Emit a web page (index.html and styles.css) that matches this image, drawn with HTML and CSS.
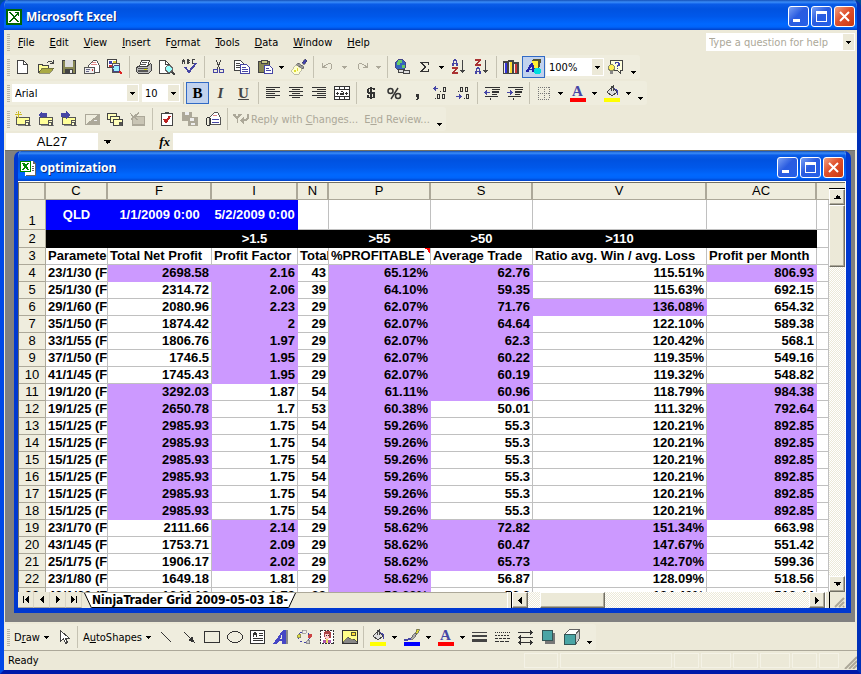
FILE: index.html
```
<!DOCTYPE html>
<html lang="en">
  <head>
    <meta charset="UTF-8" />
    <meta name="viewport" content="width=device-width, initial-scale=1.0" />
    <title>Microsoft Excel</title>
    <link rel="stylesheet" href="styles.css">
  </head>
  <body>
    <!-- shared symbols -->
    <svg class="defs" aria-hidden="true">
      <symbol id="down" viewBox="0 0 5 3"><path d="M0 0h5v1H4v1H3v1H2V2H1V1H0z" /></symbol>
      <symbol id="left" viewBox="0 0 4 7"><path d="M4 0v7H3V6H2V5H1V4H0V3h1V2h1V1h1V0z" /></symbol>
      <symbol id="right" viewBox="0 0 4 7"><path d="M0 0v7h1V6h1V5h1V4h1V3H3V2H2V1H1V0z" /></symbol>
      <symbol id="folder" viewBox="0 0 16 16">
        <path d="M1.500 6.500h13v7h-13z" fill="#ff9" stroke="#555" /><path d="M3 14h13v1H3z" fill="#888" />
        <path d="M10 9h5v6h-5z" fill="#555" /><path d="M11 10h3v1h-3zM11 12h2v2h-2z" fill="#ffc" />
      </symbol>
      <symbol id="bucket" viewBox="0 0 16 16">
        <path d="M3 7l5-5 5 5-5 4z" fill="#ddd" stroke="#444" /><path d="M7 6V2l2-1v5" fill="none" stroke="#444" />
        <path d="M10 3l4 2v5h-1V7l-3-3z" fill="#4646a5" />
      </symbol>
      <symbol id="page" viewBox="0 0 11 14"><path d="M.5 .5h6l4 4v9H.5z" fill="#fff" stroke="#444" /><path d="M6.500 .5v4h4" fill="none" stroke="#444" /></symbol>
      <symbol id="magnifier" viewBox="0 0 9 9"><circle cx="3.500" cy="3.500" r="3" fill="#9ff" stroke="#666" /><path d="M6 6l3 3" stroke="#444" stroke-width="2" /></symbol>
    </svg>

    <div class="window">
      <header class="titlebar">
        <svg class="icon" viewBox="0 0 16 16">
          <path d="M0 0h16v16H0z" fill="#060" /><path d="M2 2h12v12H2z" fill="#fff" />
          <path d="M3 3h2l3 4 3-3H9V3h4v4h-1V5L9 8l4 5h-2L8 9l-4 4H3v-1l4-4-4-4z" fill="#060" />
        </svg>
        <h1>Microsoft Excel</h1>
        <button class="win-btn" aria-label="Minimize"><svg viewBox="0 0 19 19"><path d="M4 12h7v3H4z" fill="#fff" /></svg></button>
        <button class="win-btn" aria-label="Restore"><svg viewBox="0 0 19 19"><path d="M4 4h11v11H4zM5 7v7h9V7z" fill="#fff" fill-rule="evenodd" /></svg></button>
        <button class="win-btn close" aria-label="Close"><svg class="smooth" viewBox="0 0 19 19"><path d="M5 5l9 9M14 5l-9 9" stroke="#fff" stroke-width="2" /></svg></button>
      </header>

      <nav class="menubar">
        <span class="grip"></span>
        <a href="#"><u>F</u>ile</a>
        <a href="#"><u>E</u>dit</a>
        <a href="#"><u>V</u>iew</a>
        <a href="#"><u>I</u>nsert</a>
        <a href="#">F<u>o</u>rmat</a>
        <a href="#"><u>T</u>ools</a>
        <a href="#"><u>D</u>ata</a>
        <a href="#"><u>W</u>indow</a>
        <a href="#"><u>H</u>elp</a>
        <span class="combo ask">
          <input type="text" placeholder="Type a question for help" aria-label="Type a question for help">
          <span class="drop"><svg class="arrow"><use href="#down" /></svg></span>
        </span>
      </nav>

      <!-- standard -->
      <div class="toolbar">
        <span class="grip"></span>
        <button class="tool" aria-label="New"><svg viewBox="0 0 16 16"><use href="#page" x="2" y="1" width="11" height="14" /></svg></button>
        <button class="tool" aria-label="Open"><svg viewBox="0 0 16 16">
          <path d="M0 5h5v1h6v8H0z" fill="#444" /><path d="M1 6h3v1h6v2H4l-3 4z" fill="#ff9" />
          <path d="M4 9h12l-4 5H1z" fill="#aa4" stroke="#553" stroke-width=".6" /><path d="M9 3h1V2h4v1h1V1h1v4h-4V4h2V3h-4v1H9z" fill="#444" /></svg></button>
        <button class="tool" aria-label="Save"><svg viewBox="0 0 16 16">
          <path d="M1 1h14v14H1z" fill="#444" /><path d="M2 2h12v12H2z" fill="#885" /><path d="M4 1h8v7H4z" fill="#ddd" /><path d="M4 10h8v5H4z" fill="#444" /><path d="M9 11h2v3H9z" fill="#eee" /></svg></button>
        <button class="tool" aria-label="E-mail"><svg viewBox="0 0 16 16">
          <path d="M4.500 6.500l5-5h3l3 5v7h-11z" fill="#fff" stroke="#555" /><path d="M8 3h4v1H8zM7 5h6v1H7z" fill="#d88" />
          <path d="M.5 8.500h10v6H.5z" fill="#eee" stroke="#555" /><path d="M2 10h4v1H2zM2 12h3v1H2z" fill="#668" /><path d="M8 10h1v2H8z" fill="#c33" /></svg></button>
        <button class="tool" aria-label="Search"><svg viewBox="0 0 16 16">
          <path d="M.5 .5h9v8h-9z" fill="#fff" stroke="#444" /><path d="M2 2h3v3H2z" fill="#44a" /><path d="M6 2h3v3H6z" fill="#dc3" /><path d="M2 6h3v2H2z" fill="#c33" />
          <path d="M5.500 4.500h7v9h-7z" fill="#eee" stroke="#555" /><circle cx="9.500" cy="9.500" r="3.500" fill="#9ef" stroke="#448" /><path d="M12 12h2v1h1v2h-2v-1h-1z" fill="#d22" /></svg></button>
        <span class="sep"></span>
        <button class="tool" aria-label="Print"><svg viewBox="0 0 16 16">
          <path d="M5.500 1.500h8l-2 6h-8z" fill="#fff" stroke="#444" /><path d="M6 3h5v1H6zM5 5h5v1H5z" fill="#555" />
          <path d="M1.500 7.500h10l3-3 1 1v6l-3 3h-10l-2-2v-3z" fill="#bbb" stroke="#444" /><path d="M2 9h10v1H2zM2 11h10v2H2z" fill="#555" /><path d="M8 10h3v1H8z" fill="#dd0" /></svg></button>
        <button class="tool" aria-label="Print Preview"><svg viewBox="0 0 16 16"><use href="#page" width="11" height="14" y="1" /><use href="#magnifier" x="6" y="6" width="10" height="10" /></svg></button>
        <button class="tool" aria-label="Spelling"><svg viewBox="0 0 16 16">
          <path d="M1 0h1v1h1v4H2V3H1v2H0V1h1zM5 0h2v1h1v1H7v1h1v1H7v1H5zM10 0h3v1h-2v3h2v1h-3z" fill="#444" /><path d="M3 8l4 5 7-9" fill="none" stroke="#4646a5" stroke-width="2" /></svg></button>
        <span class="sep"></span>
        <button class="tool" aria-label="Cut"><svg viewBox="0 0 16 16">
          <path d="M5 1l4 9M10 1l-4 9" stroke="#444" /><circle cx="4.500" cy="12" r="2" fill="none" stroke="#4646a5" /><circle cx="10.500" cy="12" r="2" fill="none" stroke="#4646a5" /></svg></button>
        <button class="tool" aria-label="Copy"><svg viewBox="0 0 16 16">
          <path d="M.5 1.500h6l3 3v7h-9z" fill="#fff" stroke="#444" /><path d="M2 4h4v1H2zM2 6h4v1H2zM2 8h4v1H2z" fill="#444" />
          <path d="M6.500 5.500h6l3 3v6h-9z" fill="#fff" stroke="#4646a5" /><path d="M8 8h4v1H8zM8 10h6v1H8zM8 12h6v1H8z" fill="#4646a5" /></svg></button>
        <button class="tool" aria-label="Paste"><svg viewBox="0 0 16 16">
          <path d="M1 2h12v12H1z" fill="#444" /><path d="M2 3h10v10H2z" fill="#885" /><path d="M4 1h6v3H4z" fill="#cc8" stroke="#444" />
          <path d="M7.500 6.500h5l3 3v5h-8z" fill="#fff" stroke="#4646a5" /><path d="M9 9h3v1H9zM9 11h5v1H9z" fill="#4646a5" /></svg></button>
        <button class="more" aria-label="Paste options"><svg class="arrow"><use href="#down" /></svg></button>
        <button class="tool" aria-label="Format Painter"><svg viewBox="0 0 16 16">
          <path d="M11 4l3-4 2 2-3 4z" fill="#44a" stroke="#334" stroke-width=".5" /><path d="M7 4l6 4-1 2-7-4z" fill="#999" stroke="#444" stroke-width=".6" /><path d="M5 6l6 4-3 5H3l-3-3z" fill="#ffc" stroke="#998" stroke-width=".6" /><path d="M3 11h2v2H3zM6 9h1v3H6z" fill="#dd3" /></svg></button>
        <span class="sep"></span>
        <button class="tool off" aria-label="Undo" disabled><svg viewBox="0 0 16 16"><path d="M2 4h1v3h1V6h2V5h2V4h3v1h1v5h-1v1h-1v-1h1V5H8v1H6v1H5v1h2v1H2z" /></svg></button>
        <button class="more off" aria-label="Undo list" disabled><svg class="arrow"><use href="#down" /></svg></button>
        <button class="tool off" aria-label="Redo" disabled><svg viewBox="0 0 16 16"><path d="M14 4h-1v3h-1V6h-2V5H8V4H5v1H4v5h1v1h1v-1H5V5h3v1h2v1h1v1H9v1h5z" /></svg></button>
        <button class="more off" aria-label="Redo list" disabled><svg class="arrow"><use href="#down" /></svg></button>
        <span class="sep"></span>
        <button class="tool" aria-label="Insert Hyperlink"><svg viewBox="0 0 16 16">
          <circle cx="6.500" cy="6" r="5.500" fill="#36b" stroke="#448" /><path d="M4 1h4v3H6v2H3V3h1zM8 6h3v3H8z" fill="#6c6" /><rect x="4.500" y="10.500" width="6" height="3" rx="1" fill="#ddd" stroke="#444" /><rect x="9.500" y="11.500" width="6" height="3" rx="1" fill="#ddd" stroke="#444" /></svg></button>
        <button class="tool" aria-label="AutoSum"><svg viewBox="0 0 16 16"><path d="M3 3h9v3h-1V4H6l3 4-4 4h6v-2h1v3H3v-1l4-4-4-4z" fill="#333" /></svg></button>
        <button class="more" aria-label="AutoSum options"><svg class="arrow"><use href="#down" /></svg></button>
        <button class="tool" aria-label="Sort Ascending"><svg viewBox="0 0 16 16">
          <path d="M3 0h2v1h1v3h1v3H5V5H3v2H1V4h1V1h1zM3 4h2V2H3z" fill="#4646a5" fill-rule="evenodd" /><path d="M1 8h6v2H6v1H5v1H4v1h3v2H1v-2h1v-1h1v-1h1v-1H1z" fill="#a33" /><path d="M11 1h1v10h2v1h-1v1h-1v1h-1v-1h-1v-1H9v-1h2z" fill="#444" /></svg></button>
        <button class="tool" aria-label="Sort Descending"><svg viewBox="0 0 16 16">
          <path d="M1 0h6v2H6v1H5v1H4v1h3v2H1V5h1V4h1V3h1V2H1z" fill="#a33" /><path d="M3 8h2v1h1v3h1v3H5v-2H3v2H1v-3h1V9h1zM3 12h2v-2H3z" fill="#4646a5" fill-rule="evenodd" /><path d="M11 1h1v10h2v1h-1v1h-1v1h-1v-1h-1v-1H9v-1h2z" fill="#444" /></svg></button>
        <span class="sep"></span>
        <button class="tool" aria-label="Chart Wizard"><svg viewBox="0 0 16 16">
          <path d="M0 2h5v13H0zM5 1h6v14H5zM10 3h6v12h-6z" fill="#444" /><path d="M1 4h1v10H1zM6 3h1v11H6zM11 5h1v9h-1z" fill="#eee" /><path d="M2 4h2v10H2z" fill="#33d" /><path d="M7 3h2v11H7z" fill="#fd3" /><path d="M12 5h2v9h-2z" fill="#c33" /></svg></button>
        <button class="tool on" aria-label="Drawing"><svg viewBox="0 0 16 16">
          <path d="M6 1l2-1h7l-1 8-3 2H6z" fill="#553" /><path d="M6 2h6v7H6z" fill="#fe3" /><path d="M5 4h2l2 9H6v-2H3v2H0v-1zM6 7l-2 3h2z" fill="#22a" fill-rule="evenodd" /><circle cx="11.500" cy="12" r="3.500" fill="#0dd" /></svg></button>
        <span class="combo zoom">
          <select aria-label="Zoom"><option>100%</option></select>
          <span class="drop"><svg class="arrow"><use href="#down" /></svg></span>
        </span>
        <button class="tool" aria-label="Help"><svg viewBox="0 0 16 16">
          <path d="M2.500 1.500h12v10h-2v3l-3-3h-7z" fill="#ffd" stroke="#444" /><path d="M7 3h4v1h1v3h-2v1H9V6h1V4H8v1H7zM9 9h1v1H9z" fill="#44a" /><circle cx="3.500" cy="8.500" r="3" fill="#fe5" stroke="#886" /><path d="M2 12h3v3H2z" fill="#888" /></svg></button>
        <button class="more end" aria-label="Toolbar Options"><svg class="arrow"><use href="#down" /></svg></button>
      </div>

      <!-- formatting -->
      <div class="toolbar">
        <span class="grip"></span>
        <span class="combo font">
          <select aria-label="Font"><option>Arial</option></select>
          <span class="drop"><svg class="arrow"><use href="#down" /></svg></span>
        </span>
        <span class="combo size">
          <select aria-label="Font Size"><option>10</option></select>
          <span class="drop"><svg class="arrow"><use href="#down" /></svg></span>
        </span>
        <span class="sep"></span>
        <button class="tool letter on"><b>B</b></button>
        <button class="tool letter"><i>I</i></button>
        <button class="tool letter"><u>U</u></button>
        <span class="sep"></span>
        <button class="tool" aria-label="Align Left"><svg viewBox="0 0 16 16"><path d="M1 2h14v1H1zM1 4h9v1H1zM1 6h14v1H1zM1 8h9v1H1zM1 10h14v1H1zM1 12h9v1H1z" fill="#333" /></svg></button>
        <button class="tool" aria-label="Center"><svg viewBox="0 0 16 16"><path d="M1 2h14v1H1zM4 4h8v1H4zM1 6h14v1H1zM4 8h8v1H4zM1 10h14v1H1zM4 12h8v1H4z" fill="#333" /></svg></button>
        <button class="tool" aria-label="Align Right"><svg viewBox="0 0 16 16"><path d="M1 2h14v1H1zM6 4h9v1H6zM1 6h14v1H1zM6 8h9v1H6zM1 10h14v1H1zM6 12h9v1H6z" fill="#333" /></svg></button>
        <button class="tool" aria-label="Merge and Center"><svg viewBox="0 0 16 16">
          <path d="M.5 1.500h15v13H.5z" fill="#fff" stroke="#333" /><path d="M1 4h14v1H1zM1 11h14v1H1zM5 1h1v3H5zM10 1h1v3h-1zM5 12h1v3H5zM10 12h1v3h-1zM2 8h3v1H2zM3 7h1v3H3zM11 8h3v1h-3zM12 7h1v3h-1zM7 6h2v1h1v3H6V8h3V7H7z" fill="#333" /></svg></button>
        <span class="sep"></span>
        <button class="tool" aria-label="Currency Style"><svg viewBox="0 0 16 16"><path d="M7 2h2v1h3v2h-2V4H9v3h2l1 1v4l-1 1H9v1H7v-1H4v-3h2v2h1V9H5L4 8V4l1-1h2zM7 4H6v3h1zM9 9v3h1V9z" fill="#333" fill-rule="evenodd" /></svg></button>
        <button class="tool" aria-label="Percent Style"><svg class="smooth" viewBox="0 0 16 16"><path d="M12 3L5 14" stroke="#333" stroke-width="1.500" /><circle cx="4.500" cy="6" r="2.500" fill="none" stroke="#333" stroke-width="1.500" /><circle cx="12" cy="11" r="2.500" fill="none" stroke="#333" stroke-width="1.500" /></svg></button>
        <button class="tool" aria-label="Comma Style"><svg viewBox="0 0 16 16"><path d="M7 9h3v4l-1 1-1 1H7v-1h1v-2H7z" fill="#333" /></svg></button>
        <button class="tool" aria-label="Increase Decimal"><svg viewBox="0 0 16 16">
          <path d="M1 3h1V2h1V1h1v2h2v1H4v2H3V5H2V4H1z" fill="#4646a5" /><path d="M8 6h1v1H8zM11 2h3v5h-3zM12 3v3h1V3zM3 13h1v1H3zM5 9h3v5H5zM6 10v3h1v-3zM10 9h3v5h-3zM11 10v3h1v-3z" fill="#333" fill-rule="evenodd" /></svg></button>
        <button class="tool" aria-label="Decrease Decimal"><svg viewBox="0 0 16 16">
          <path d="M1 11h3V9h1v1h1v1h1v1H6v1H5v1H4v-2H1z" fill="#4646a5" /><path d="M3 6h1v1H3zM5 2h3v5H5zM6 3v3h1V3zM10 2h3v5h-3zM11 3v3h1V3zM9 13h1v1H9zM11 9h3v5h-3zM12 10v3h1v-3z" fill="#333" fill-rule="evenodd" /></svg></button>
        <span class="sep"></span>
        <button class="tool" aria-label="Decrease Indent"><svg viewBox="0 0 16 16"><path d="M1 2h15v1H1zM8 4h8v1H8zM8 6h7v2H8zM8 9h5v1H8zM1 11h13v1H1zM6 13h1v2H6z" fill="#333" /><path d="M0 7h1V6h1V5h1v2h3v1H3v2H2V9H1V8H0z" fill="#4646a5" /></svg></button>
        <button class="tool" aria-label="Increase Indent"><svg viewBox="0 0 16 16"><path d="M1 2h15v1H1zM8 4h8v1H8zM8 6h7v2H8zM8 9h5v1H8zM1 11h13v1H1zM6 13h1v2H6z" fill="#333" /><path d="M6 7H5V6H4V5H3v2H0v1h3v2h1V9h1V8h1z" fill="#4646a5" /></svg></button>
        <span class="sep"></span>
        <button class="tool" aria-label="Borders"><svg viewBox="0 0 16 16"><path d="M2 2.500h12M2 8.500h12M2 14.500h12M2.500 2v12M8.500 2v12M13.500 2v12" stroke="#777" stroke-dasharray="1" /></svg></button>
        <button class="more" aria-label="Border options"><svg class="arrow"><use href="#down" /></svg></button>
        <button class="tool letter color red" aria-label="Font Color"><b>A</b></button>
        <button class="more" aria-label="Font Color options"><svg class="arrow"><use href="#down" /></svg></button>
        <button class="tool color yellow" aria-label="Fill Color"><svg viewBox="0 0 16 13"><use href="#bucket" width="16" height="16" /></svg></button>
        <button class="more" aria-label="Fill Color options"><svg class="arrow"><use href="#down" /></svg></button>
        <button class="more end" aria-label="Toolbar Options"><svg class="arrow"><use href="#down" /></svg></button>
      </div>

      <!-- reviewing -->
      <div class="toolbar">
        <span class="grip"></span>
        <button class="tool" aria-label="New Comment"><svg viewBox="0 0 16 16"><use href="#folder" width="16" height="16" /><path d="M3 0h1v7H3zM0 3h7v1H0zM1 1h1v1H1zM5 1h1v1H5zM1 5h1v1H1z" fill="#cb2" /></svg></button>
        <button class="tool" aria-label="Previous Comment"><svg viewBox="0 0 16 16"><use href="#folder" width="16" height="16" /><path d="M0 4l4-4v2h5v4H4v2z" fill="#4646a5" /></svg></button>
        <button class="tool" aria-label="Next Comment"><svg viewBox="0 0 16 16"><use href="#folder" width="16" height="16" /><path d="M9 4L5 0v2H0v4h5v2z" fill="#4646a5" /></svg></button>
        <button class="tool" aria-label="Show Comment" disabled><svg viewBox="0 0 16 16"><path d="M1.500 3.500h14v10h-14z" fill="none" stroke="#aca899" /><path d="M15 3v11H1z" fill="#aca899" /><path d="M10 9h3v1h-3z" fill="#eee" /></svg></button>
        <button class="tool" aria-label="Show All Comments"><svg viewBox="0 0 16 16">
          <path d="M.5 2.500h9v6h-9z" fill="#ffb" stroke="#444" /><path d="M3.500 5.500h9v6h-9z" fill="#ffb" stroke="#444" /><path d="M6.500 8.500h9v6h-9z" fill="#ffb" stroke="#444" /><path d="M12 11h3v4h-3z" fill="#555" /></svg></button>
        <button class="tool" aria-label="Delete Comment" disabled><svg viewBox="0 0 16 16"><path d="M2 5h13v10H2z" fill="#aca899" /><path d="M3 6h11v7H3z" fill="#c9c5b5" /><path d="M0 2l3 3 6-4v2L5 6l4 3H7L4 7 1 9l1-3z" fill="#aca899" /></svg></button>
        <span class="sep"></span>
        <button class="tool" aria-label="Create Task"><svg viewBox="0 0 16 16"><path d="M2.500 2.500h11v12h-11z" fill="#fff" stroke="#444" /><path d="M6 1h4v2H6z" fill="#444" /><path d="M5 8l2 3 4-6" fill="none" stroke="#b22" stroke-width="2" /></svg></button>
        <button class="tool" aria-label="Update File" disabled><svg viewBox="0 0 16 16"><path d="M0 1h10v9H0z" fill="#aca899" /><path d="M3 1h4v3H3z" fill="#eee" /><path d="M6 6h10v9H6z" fill="#aca899" /><path d="M8 7h4v3H8zM9 12h4v2H9z" fill="#eee" /></svg></button>
        <button class="tool" aria-label="Send to Mail Recipient"><svg viewBox="0 0 16 16"><path d="M4.500 6.500l5-5h3l3 5v7h-11z" fill="#fff" stroke="#555" /><path d="M8 4h4v1H8z" fill="#d88" /><path d="M7 8h7v1H7zM7 11h7v1H7z" fill="#4646a5" /><rect x="1.500" y="6.500" width="4" height="8" rx="2" fill="none" stroke="#333" /></svg></button>
        <span class="sep"></span>
        <button class="text-btn off" disabled>
          <svg viewBox="0 0 16 16"><path d="M0 3h3v2h2V3h4v1H8v1H7v1H6v1H5v5H4V8H3V7H2V6H1V5H0zM7 10V9h1V8h1V7h1V6h1v2h2V7h1V3h2v5h-1v1h-1v1h-3v3h-1v-1H9v-1H8v-1z" /></svg>
          <span>Reply with <u>C</u>hanges...</span>
        </button>
        <button class="text-btn off" disabled><span>E<u>n</u>d Review...</span></button>
        <button class="more end" aria-label="Toolbar Options"><svg class="arrow"><use href="#down" /></svg></button>
      </div>

      <div class="formula">
        <input class="name-box" type="text" value="AL27" aria-label="Name Box">
        <button class="name-drop" aria-label="Names"><svg class="arrow big"><use href="#down" /></svg></button>
        <button class="fx" aria-label="Insert Function">fx</button>
        <input class="formula-input" type="text" aria-label="Formula Bar">
      </div>

      <main class="workspace">
        <section class="book">
          <header class="titlebar">
            <svg class="icon" viewBox="0 0 16 16">
              <path d="M5 1h8l3 3v12H5z" fill="#fff" /><path d="M13 1l3 3h-3zM15 4h1v12H6v-1h9zM12 6h2v1h-2zM12 8h2v1h-2zM12 10h2v1h-2z" fill="#666" />
              <path d="M0 1h11v11H0z" fill="#080" /><path d="M1 2h9v9H1z" fill="#fff" /><path d="M2 3h2l2 2 1-2h2L7 6l2 4H7L5 8l-1 2H2l2-3z" fill="#080" />
            </svg>
            <h2>optimization</h2>
            <button class="win-btn" aria-label="Minimize"><svg viewBox="0 0 19 19"><path d="M4 12h7v3H4z" fill="#fff" /></svg></button>
            <button class="win-btn" aria-label="Maximize"><svg viewBox="0 0 19 19"><path d="M4 4h11v11H4zM5 7v7h9V7z" fill="#fff" fill-rule="evenodd" /></svg></button>
            <button class="win-btn close" aria-label="Close"><svg class="smooth" viewBox="0 0 19 19"><path d="M5 5l9 9M14 5l-9 9" stroke="#fff" stroke-width="2" /></svg></button>
          </header>

          <div class="sheet">
            <div class="grid">
              <table>
                <colgroup>
                  <col class="w-num"><col class="w-c"><col class="w-f"><col class="w-i"><col class="w-n">
                  <col class="w-p"><col class="w-p"><col class="w-v"><col class="w-ac"><col>
                </colgroup>
                <thead>
                  <tr><th></th><th>C</th><th>F</th><th>I</th><th>N</th><th>P</th><th>S</th><th>V</th><th>AC</th><th></th></tr>
                </thead>
                <tbody id="rows">
                  <tr class="dates"><th>1</th><td class="blue">QLD</td><td class="blue">1/1/2009 0:00</td><td class="blue">5/2/2009 0:00</td><td></td><td></td><td></td><td></td><td></td><td></td></tr>
                  <tr class="limits"><th>2</th><td></td><td></td><td>&gt;1.5</td><td></td><td>&gt;55</td><td>&gt;50</td><td>&gt;110</td><td></td><td></td></tr>
                  <tr class="names"><th>3</th><td>Parameters</td><td>Total Net Profit</td><td>Profit Factor</td><td>Total</td><td class="note">%PROFITABLE</td><td>Average Trade</td><td>Ratio avg. Win / avg. Loss</td><td>Profit per Month</td><td></td></tr>
                </tbody>
              </table>
            </div>
            <div class="vscroll">
              <span class="split-h"></span>
              <button class="sb" aria-label="Scroll up"><svg class="arrow big flip"><use href="#down" /></svg></button>
              <span class="thumb"></span>
              <button class="sb last" aria-label="Scroll down"><svg class="arrow big"><use href="#down" /></svg></button>
            </div>
          </div>

          <footer class="tabs">
            <button class="nav" aria-label="First sheet"><svg viewBox="0 0 6 7"><path d="M0 0h1v7H0z" /><use href="#left" x="2" width="4" height="7" /></svg></button>
            <button class="nav" aria-label="Previous sheet"><svg viewBox="0 0 6 7"><use href="#left" x="1" width="4" height="7" /></svg></button>
            <button class="nav" aria-label="Next sheet"><svg viewBox="0 0 6 7"><use href="#right" x="1" width="4" height="7" /></svg></button>
            <button class="nav" aria-label="Last sheet"><svg viewBox="0 0 6 7"><use href="#right" width="4" height="7" /><path d="M5 0h1v7H5z" /></svg></button>
            <div class="tab-area">
              <svg class="slant" viewBox="0 0 8 15"><path d="M0 0h8v15H7z" fill="#fff" /><path d="M.5 0l7 15" stroke="#000" fill="none" /></svg>
              <a class="tab" href="#">NinjaTrader Grid 2009-05-03 18-</a>
              <svg class="slant" viewBox="0 0 8 15"><path d="M0 0h8L1 15H0z" fill="#fff" /><path d="M7.500 0l-7 15" stroke="#000" fill="none" /></svg>
            </div>
            <div class="hscroll">
              <span class="split-v"></span>
              <button class="sb" aria-label="Scroll left"><svg viewBox="0 0 4 7"><use href="#left" width="4" height="7" /></svg></button>
              <span class="thumb"></span>
              <button class="sb last" aria-label="Scroll right"><svg viewBox="0 0 4 7"><use href="#right" width="4" height="7" /></svg></button>
              <span class="split-v"></span>
            </div>
            <svg class="sizer smooth" viewBox="0 0 16 16"><path d="M5 15l9-9M9 15l5-5M13 15l1-1" stroke="#aca899" stroke-width="2" /></svg>
          </footer>
        </section>
      </main>

      <!-- drawing -->
      <div class="toolbar drawing">
        <span class="grip"></span>
        <button class="text-btn"><span>D<u>r</u>aw</span><svg class="arrow"><use href="#down" /></svg></button>
        <button class="tool" aria-label="Select Objects"><svg viewBox="0 0 16 16"><path d="M5.500 1.500v11l3-3 2 5 2-1-2-4h4z" fill="#fff" stroke="#444" /></svg></button>
        <span class="sep"></span>
        <button class="text-btn"><span>A<u>u</u>toShapes</span><svg class="arrow"><use href="#down" /></svg></button>
        <button class="tool" aria-label="Line"><svg viewBox="0 0 16 16"><path d="M3 3l10 10" stroke="#333" /></svg></button>
        <button class="tool" aria-label="Arrow"><svg viewBox="0 0 16 16"><path d="M3 3l8 8" stroke="#333" /><path d="M14 14L7 11l4-4z" fill="#333" /></svg></button>
        <button class="tool" aria-label="Rectangle"><svg viewBox="0 0 16 16"><path d="M.5 2.500h15v11H.5z" fill="none" stroke="#333" /></svg></button>
        <button class="tool" aria-label="Oval"><svg viewBox="0 0 16 16"><ellipse cx="8" cy="8" rx="7.500" ry="5.500" fill="none" stroke="#333" /></svg></button>
        <button class="tool" aria-label="Text Box"><svg viewBox="0 0 16 16"><path d="M.5 1.500h14v13H.5z" fill="#fff" stroke="#333" /><path d="M4 3h2v1h1v4H6V6H4v2H3V4h1zM9 4h4v1H9zM9 6h4v1H9zM3 9h10v1H3zM3 11h10v1H3z" fill="#333" /></svg></button>
        <button class="tool" aria-label="WordArt"><svg viewBox="0 0 16 16"><path d="M12 1h3v14h-2z" fill="#888" /><path d="M10 1h3v14h-4v-3H6l-2 3H0zM9 5l-2 5h2z" fill="#4646c5" fill-rule="evenodd" /></svg></button>
        <button class="tool" aria-label="Diagram"><svg viewBox="0 0 16 16"><circle cx="8" cy="8" r="5.500" fill="none" stroke="#4646a5" stroke-dasharray="3 2" /><path d="M6 1h4v3H6z" fill="#eee" stroke="#666" stroke-width=".5" /><circle cx="3" cy="7" r="2" fill="#dd4" stroke="#555" stroke-width=".5" /><circle cx="14" cy="7" r="2" fill="#c44" /><circle cx="12" cy="13" r="2" fill="#ccc" stroke="#555" stroke-width=".5" /></svg></button>
        <button class="tool" aria-label="Clip Art"><svg viewBox="0 0 16 16"><path d="M1.500 1.500h13v13h-13z" fill="#fff" stroke="#333" stroke-dasharray="2 1" /><path d="M6 2h5v1h1v6h-2v1H6V8H5V3h1z" fill="#a44" /><path d="M6 5h4v5H7V9H6z" fill="#fcc" /><path d="M7 6h1v1H7zM9 6h1v1H9z" fill="#333" /><path d="M4 11h8v3H4z" fill="#a5a" /><path d="M7 10h2v4H7z" fill="#ed5" /></svg></button>
        <button class="tool" aria-label="Picture"><svg viewBox="0 0 16 16"><path d="M.5 1.500h15v13H.5z" fill="#ff8" stroke="#333" /><circle cx="11.500" cy="5" r="2" fill="#fd3" stroke="#553" /><path d="M1 13l5-5 4 3 2-1 3 3v1H1z" fill="#888" stroke="#333" stroke-width=".6" /></svg></button>
        <span class="sep"></span>
        <button class="tool color yellow" aria-label="Fill Color"><svg viewBox="0 0 16 13"><use href="#bucket" width="16" height="16" /></svg></button>
        <button class="more" aria-label="Fill Color options"><svg class="arrow"><use href="#down" /></svg></button>
        <button class="tool color blueline" aria-label="Line Color"><svg viewBox="0 0 16 13"><path d="M13 0h2v2l-2 3h-2z" fill="#dd3" stroke="#444" stroke-width=".6" /><path d="M11 4l2 1-4 5H6z" fill="#aaa" stroke="#333" stroke-width=".6" /><path d="M0 10h4v-1h3v2H4v1H0z" fill="#4646a5" /></svg></button>
        <button class="more" aria-label="Line Color options"><svg class="arrow"><use href="#down" /></svg></button>
        <button class="tool letter color red" aria-label="Font Color"><b>A</b></button>
        <button class="more" aria-label="Font Color options"><svg class="arrow"><use href="#down" /></svg></button>
        <button class="tool" aria-label="Line Style"><svg viewBox="0 0 16 16"><path d="M0 3h15v1H0zM0 6h15v2H0zM0 10h15v3H0z" fill="#444" /></svg></button>
        <button class="tool" aria-label="Dash Style"><svg viewBox="0 0 16 16"><path d="M0 3.500h15" stroke="#333" stroke-dasharray="1" /><path d="M0 6.500h15" stroke="#333" stroke-dasharray="2 1" /><path d="M0 9.500h15" stroke="#333" stroke-dasharray="3 1" /><path d="M0 12.500h15" stroke="#333" stroke-dasharray="4 1" /></svg></button>
        <button class="tool" aria-label="Arrow Style"><svg viewBox="0 0 16 16"><path d="M0 3h12V1h1v1h1v1h1v1h-1v1h-1v1h-1V4H0zM3 8h12v1H3v2H2v-1H1V9H0V8h1V7h1V6h1zM3 13h9v-2h1v1h1v1h1v1h-1v1h-1v1h-1v-2H3v2H2v-1H1v-1H0v-1h1v-1h1v-1h1z" fill="#333" /></svg></button>
        <button class="tool" aria-label="Shadow Style"><svg viewBox="0 0 16 16"><path d="M4 4h10v11H4z" fill="#777" /><path d="M1.500 1.500h10v10h-10z" fill="#4aa5a5" stroke="#355" /></svg></button>
        <button class="tool" aria-label="3-D Style"><svg viewBox="0 0 16 16"><path d="M.5 5.500l5-5h10l-4 5z" fill="#fff" stroke="#666" /><path d="M11.500 5.500l4-5v9l-4 6z" fill="#ccc" stroke="#666" /><path d="M.5 5.500h11v10H.5z" fill="#4aa5a5" stroke="#355" /></svg></button>
        <button class="more end" aria-label="Toolbar Options"><svg class="arrow"><use href="#down" /></svg></button>
      </div>

      <footer class="status">
        <span class="message">Ready</span>
        <span class="panel p34"></span><span class="panel p112"></span><span class="panel p25"></span><span class="panel p30"></span><span class="panel p25"></span><span class="panel p30"></span><span class="panel p25"></span><span class="panel p20"></span>
        <svg class="sizer smooth" viewBox="0 0 16 16"><path d="M4 16L16 4M8 16l8-8M12 16l4-4" stroke="#aca899" stroke-width="2" /></svg>
      </footer>
    </div>
    <script src="script.js"></script>
  </body>
</html>
```
FILE: styles.css
```
* {
  box-sizing: border-box;
}
body {
  margin: 0;
  font-family: Tahoma, "DejaVu Sans Condensed", "Noto Sans", sans-serif;
  font-size: 11px;
  color: #000;
  background-color: #004e98;
}
button,
input,
select {
  margin: 0;
  padding: 0;
  border: 0;
  border-radius: 0;
  background: none;
  font: inherit;
  color: inherit;
  appearance: none;
  outline: 0;
}
a {
  color: inherit;
  text-decoration: none;
}
svg {
  display: block;
  flex: none;
  shape-rendering: crispEdges;
}
.smooth {
  shape-rendering: auto;
}
.defs {
  display: none;
}
.off {
  color: #aca899;
  fill: #aca899;
}

/* window */
.window {
  display: flex;
  flex-direction: column;
  height: 100vh;
  border: 4px solid #0048e8;
  border-top: 0;
  border-color: #0048e8 #0030b8 #0018a8 #0048e8;
  border-radius: 8px 8px 0 0;
  background-color: #ece9d8;
  overflow: hidden;
}
.titlebar {
  display: flex;
  align-items: center;
  flex: none;
  gap: 2px;
  height: 30px;
  margin: 0 -4px;
  padding: 3px 6px 0;
  background: linear-gradient(#1450b8, #3a8cf8 7%, #0a5ce8 14%, #0052e0 30%, #0058ea 55%, #0068ff 80%, #0064fa 90%, #0040c8);
}
.titlebar .icon {
  width: 16px;
  height: 16px;
}
.titlebar h1,
.titlebar h2 {
  flex: 1;
  margin: 0;
  padding-left: 2px;
  font-family: "Trebuchet MS", "Noto Sans", sans-serif;
  font-size: 12px;
  line-height: 16px;
  color: #fff;
  text-shadow: 1px 1px #0a2a80;
}
.win-btn {
  width: 21px;
  height: 21px;
  border: 1px solid #fff;
  border-radius: 3px;
  background: linear-gradient(135deg, #7aa0f4, #2a5ce0 45%, #2460e8);
}
.win-btn svg {
  width: 19px;
  height: 19px;
}
.close {
  background: linear-gradient(135deg, #f0a080, #e0502c 45%, #c83810);
}

/* menu */
.menubar {
  display: flex;
  align-items: center;
  gap: 15px;
  flex: none;
  height: 24px;
  padding: 0 2px 0 3px;
}
.grip {
  flex: none;
  width: 3px;
  height: 17px;
  margin: 0 1px 0 3px;
  background: repeating-linear-gradient(#b8b5a4 0 1px, transparent 1px 2px);
}
.menubar .grip {
  margin: 0 -7px 0 0;
}
.combo {
  display: flex;
  flex: none;
  height: 18px;
  border: 1px solid #fff;
  background-color: #fff;
}
.combo input,
.combo select {
  flex: 1;
  min-width: 0;
  padding-left: 2px;
}
.drop {
  display: flex;
  align-items: center;
  justify-content: center;
  width: 11px;
  background-color: #ece9d8;
}
.arrow {
  width: 5px;
  height: 3px;
}
.arrow.big {
  width: 7px;
  height: 4px;
}
.flip {
  transform: rotate(180deg);
}
.ask {
  width: 149px;
  margin-left: auto;
}
.ask input::placeholder {
  color: #aca899;
}
.zoom {
  width: 58px;
  margin-left: 1px;
}
.font {
  width: 127px;
  margin-left: 1px;
}
.size {
  width: 38px;
  margin-left: 3px;
}

/* toolbars */
.toolbar {
  display: flex;
  align-items: center;
  align-self: flex-start;
  flex: none;
  height: 24px;
  margin: 1px 0;
  border-radius: 0 3px 3px 0;
  background-color: #efedde;
}
.tool {
  display: flex;
  align-items: center;
  justify-content: center;
  flex: none;
  width: 23px;
  height: 22px;
}
.tool svg {
  width: 16px;
  height: 16px;
}
.on {
  border: 1px solid #316ac5;
  background-color: #c1d2ee;
}
.letter {
  font-family: "Liberation Serif", serif;
  font-size: 15px;
  line-height: 16px;
}
.letter i,
.letter u {
  font-weight: bold;
  color: #444;
}
.color {
  flex-direction: column;
}
.color svg {
  height: 13px;
}
.color::after {
  content: "";
  width: 16px;
  height: 4px;
}
.letter.color b {
  height: 13px;
  line-height: 13px;
  color: #4646a5;
}
.red::after {
  background-color: #f00;
}
.yellow::after {
  background-color: #ff0;
}
.blueline::after {
  background-color: #00f;
}
.more {
  display: flex;
  align-items: center;
  justify-content: center;
  flex: none;
  width: 11px;
  height: 22px;
}
.end {
  width: 13px;
  align-items: flex-end;
  padding-bottom: 4px;
}
.sep {
  flex: none;
  width: 1px;
  height: 22px;
  margin: 0 2px 0 3px;
  background-color: #c5c2b2;
}
.text-btn {
  display: flex;
  align-items: center;
  flex: none;
  height: 22px;
  padding: 0 3px;
  white-space: nowrap;
}
.text-btn > svg:first-child {
  width: 16px;
  height: 16px;
  margin-right: 2px;
}
.text-btn .arrow {
  margin-left: 4px;
}

/* formula bar */
.formula {
  display: flex;
  flex: none;
  height: 17px;
  margin-top: 1px;
  padding-left: 2px;
}
.formula input {
  background-color: #fff;
}
.name-box {
  width: 92px;
  font-family: Arial, "Liberation Sans", sans-serif;
  font-size: 13px;
  text-align: center;
}
.name-drop {
  display: flex;
  align-items: center;
  justify-content: center;
  width: 19px;
}
.fx {
  flex: none;
  width: 56px;
  padding-right: 3px;
  text-align: right;
  font: italic bold 13px "Liberation Serif", serif;
}
.formula-input {
  flex: 1;
}

/* workbook */
.workspace {
  display: flex;
  flex: 1;
  min-height: 0;
  margin: 0 2px 2px 1px;
  padding: 0 4px 9px 9px;
  border-top: 1px solid #716f64;
  background-color: #808080;
}
.book {
  display: flex;
  flex-direction: column;
  flex: 1;
  min-width: 0;
  border: solid #0038d0;
  border-width: 0 5px 5px 4px;
  border-radius: 7px 7px 0 0;
  background-color: #ece9d8;
  overflow: hidden;
}
.sheet {
  display: flex;
  flex: 1;
  min-height: 0;
  border-top: 1px solid #fff;
}
.grid {
  flex: 1;
  overflow: hidden;
  border-top: 1px solid #716f64;
  border-left: 1px solid #716f64;
  background-color: #fff;
}
table {
  width: 100%;
  border-spacing: 0;
  table-layout: fixed;
  font-family: Arial, "Liberation Sans", sans-serif;
  font-size: 13px;
  line-height: 16px;
}
.w-num {
  width: 27px;
}
.w-c {
  width: 62px;
}
.w-f {
  width: 104px;
}
.w-i {
  width: 86px;
}
.w-n {
  width: 31px;
}
.w-p {
  width: 102px;
}
.w-v {
  width: 174px;
}
.w-ac {
  width: 110px;
}
th {
  padding: 0;
  border-right: 1px solid #aca899;
  border-bottom: 1px solid #aca899;
  font-weight: normal;
  background-color: #efedde;
}
thead th {
  height: 17px;
  border-right-width: 2px;
}
thead th:last-child {
  border-right: 0;
}
td {
  height: 17px;
  padding: 0 2px;
  border-right: 1px solid #c0c0c0;
  border-bottom: 1px solid #c0c0c0;
  font-weight: bold;
  text-align: right;
  white-space: nowrap;
  overflow: hidden;
}
td:nth-child(2),
.names td {
  text-align: left;
}
.hit {
  border-color: #c9f;
  background-color: #c9f;
}
.dates td {
  height: 30px;
  text-align: center;
}
.dates td:nth-child(2) {
  text-align: center;
}
.dates th {
  vertical-align: bottom;
}
.dates .blue {
  border-color: #00f;
  color: #fff;
  background-color: #00f;
}
.limits td {
  height: 18px;
}
.limits td:not(:last-child) {
  border-color: #000;
  color: #fff;
  text-align: center;
  background-color: #000;
}
/* comment marker in the corner */
.note {
  background: linear-gradient(45deg, transparent 50%, #f00 50%) top right / 5px 5px no-repeat;
}

/* scrollbars */
.vscroll,
.hscroll {
  display: flex;
  background: repeating-conic-gradient(#fff 0 25%, #ece9d8 0 50%) 0 0 / 2px 2px;
}
.vscroll {
  flex-direction: column;
  flex: none;
  width: 17px;
  border-right: 1px solid #fff;
}
.sb,
.thumb {
  display: flex;
  align-items: center;
  justify-content: center;
  flex: none;
  border: 1px solid;
  border-color: #fff #716f64 #716f64 #fff;
  background-color: #ece9d8;
  box-shadow: inset -1px -1px #aca899;
}
.sb {
  width: 16px;
  height: 16px;
}
.sb > svg:not(.arrow) {
  width: 4px;
  height: 7px;
}
.vscroll .last {
  margin-top: auto;
}
.vscroll .thumb {
  height: 62px;
}
.split-h {
  flex: none;
  height: 7px;
  border-bottom: 1px solid #000;
  border-top: 1px solid #716f64;
  background-color: #ece9d8;
}
.tabs {
  display: flex;
  flex: none;
  height: 16px;
}
.nav {
  display: flex;
  align-items: center;
  justify-content: center;
  width: 16px;
  border-right: 1px solid #d8d4c4;
  border-bottom: 1px solid #aca899;
}
.nav svg {
  width: 6px;
  height: 7px;
}
.tab-area {
  display: flex;
  flex: 1;
  border-top: 1px solid #aca899;
  padding-left: 2px;
}
.slant {
  width: 8px;
  height: 15px;
  shape-rendering: auto;
}
.tab {
  font-size: 12px;
  font-weight: bold;
  line-height: 14px;
  white-space: nowrap;
  border-bottom: 1px solid #000;
  background-color: #fff;
}
.hscroll {
  flex: none;
  width: 39%;
}
.split-v {
  flex: none;
  width: 5px;
  border-left: 1px solid #fff;
  border-right: 1px solid #000;
  background-color: #ece9d8;
}
.hscroll .thumb {
  width: 65px;
  margin-left: 12px;
}
.hscroll .last {
  margin-left: auto;
}
.sizer {
  width: 16px;
  height: 16px;
}

/* drawing toolbar and status bar */
.drawing {
  height: 26px;
  margin: 0;
}
.drawing .sep {
  margin: 0 2px;
}
.status {
  display: flex;
  align-items: center;
  gap: 2px;
  flex: none;
  height: 20px;
  border-top: 1px solid #aca899;
  padding-left: 4px;
}
.message {
  flex: 1;
}
.panel {
  height: 15px;
  border: 1px solid #f4f2e6;
}
.p20 {
  width: 20px;
}
.p25 {
  width: 25px;
}
.p30 {
  width: 30px;
}
.p34 {
  width: 34px;
}
.p112 {
  width: 112px;
}
```
FILE: script.js
```
// one line per sheet row, * marks a highlighted cell
const rows = [
  '23/1/30 (F|2698.58*|2.16*|43|65.12%*|62.76*|115.51%|806.93*',
  '25/1/30 (F|2314.72|2.06*|39|64.10%*|59.35*|115.63%|692.15',
  '29/1/60 (F|2080.96|2.23*|29|62.07%*|71.76*|136.08%*|654.32',
  '35/1/50 (F|1874.42|2*|29|62.07%*|64.64*|122.10%|589.38',
  '33/1/55 (F|1806.76|1.97*|29|62.07%*|62.3*|120.42%|568.1',
  '37/1/50 (F|1746.5|1.95*|29|62.07%*|60.22*|119.35%|549.16',
  '41/1/45 (F|1745.43|1.95*|29|62.07%*|60.19*|119.32%|548.82',
  '19/1/20 (F|3292.03*|1.87|54|61.11%*|60.96*|118.79%|984.38*',
  '19/1/25 (F|2650.78*|1.7|53|60.38%*|50.01|111.32%|792.64*',
  '15/1/25 (F|2985.93*|1.75|54|59.26%*|55.3|120.21%|892.85*',
  '15/1/25 (F|2985.93*|1.75|54|59.26%*|55.3|120.21%|892.85*',
  '15/1/25 (F|2985.93*|1.75|54|59.26%*|55.3|120.21%|892.85*',
  '15/1/25 (F|2985.93*|1.75|54|59.26%*|55.3|120.21%|892.85*',
  '15/1/25 (F|2985.93*|1.75|54|59.26%*|55.3|120.21%|892.85*',
  '15/1/25 (F|2985.93*|1.75|54|59.26%*|55.3|120.21%|892.85*',
  '23/1/70 (F|2111.66|2.14*|29|58.62%*|72.82*|151.34%*|663.98',
  '43/1/45 (F|1753.71|2.09*|29|58.62%*|60.47*|147.67%*|551.42',
  '25/1/75 (F|1906.17|2.02*|29|58.62%*|65.73*|142.70%*|599.36',
  '23/1/80 (F|1649.18|1.81|29|58.62%*|56.87|128.09%|518.56',
  '43/1/60 (F|1644.18|1.79|29|58.62%*|56.6|134.40%|516.44'
];

const body = document.querySelector('#rows');
rows.forEach((line, i) => {
  const tr = document.createElement('tr');
  const th = document.createElement('th');
  th.textContent = i + 4;
  tr.appendChild(th);
  (line + '|').split('|').forEach((text) => {
    const td = document.createElement('td');
    if (text.endsWith('*')) td.className = 'hit';
    td.textContent = text.replace('*', '');
    tr.appendChild(td);
  });
  body.appendChild(tr);
});
```
